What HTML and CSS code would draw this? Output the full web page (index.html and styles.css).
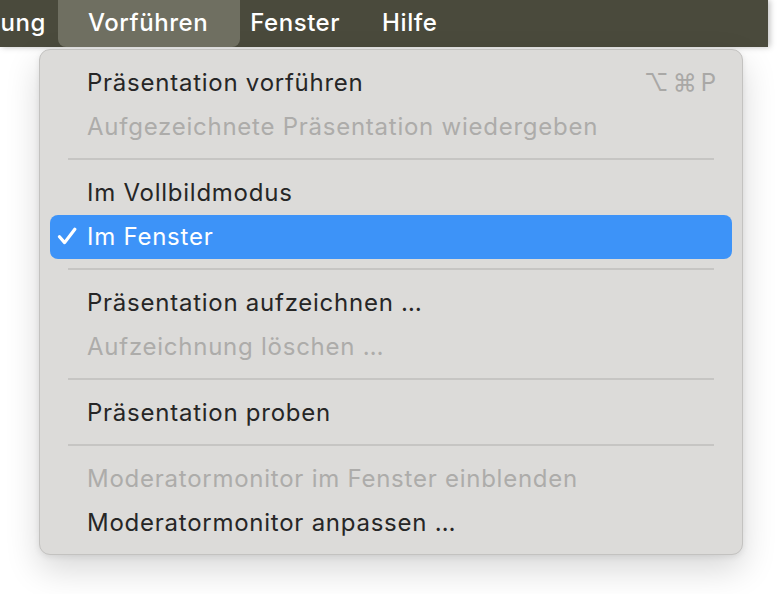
FILE: index.html
```html
<!DOCTYPE html>
<html lang="de">
<head>
<meta charset="utf-8">
<title>Vorführen</title>
<link rel="stylesheet" href="styles.css">
</head>
<body>
<div class="menubar">
  <span class="bar-item cut">ung</span>
  <span class="bar-item active">Vorführen</span>
  <span class="bar-item">Fenster</span>
  <span class="bar-item">Hilfe</span>
</div>
<div class="menu">
  <div class="row"><span class="label">Präsentation vorführen</span><span class="shortcut">⌥⌘P</span></div>
  <div class="row disabled"><span class="label">Aufgezeichnete Präsentation wiedergeben</span></div>
  <div class="sep"></div>
  <div class="row"><span class="label">Im Vollbildmodus</span></div>
  <div class="row selected"><svg class="check" width="20" height="18" viewBox="0 0 20 18"><path d="M2.5 9.8 L7.6 15.6 L17.8 2.2" fill="none" stroke="#fff" stroke-width="3.2" stroke-linecap="round" stroke-linejoin="round"/></svg><span class="label">Im Fenster</span></div>
  <div class="sep"></div>
  <div class="row"><span class="label">Präsentation aufzeichnen …</span></div>
  <div class="row disabled"><span class="label">Aufzeichnung löschen …</span></div>
  <div class="sep"></div>
  <div class="row"><span class="label">Präsentation proben</span></div>
  <div class="sep"></div>
  <div class="row disabled"><span class="label">Moderatormonitor im Fenster einblenden</span></div>
  <div class="row"><span class="label">Moderatormonitor anpassen …</span></div>
</div>
</body>
</html>
```
FILE: styles.css
```css
* { box-sizing: border-box; }
html, body {
  margin: 0;
  padding: 0;
  background: #ffffff;
  width: 782px;
  height: 594px;
  overflow: hidden;
  font-family: Inter, "Noto Sans", "Liberation Sans", sans-serif;
}
.menubar {
  width: 768px;
  height: 47px;
  background: #4a4a3c;
  display: flex;
  align-items: stretch;
  gap: 42px;
  color: #ffffff;
  font-size: 24px;
  font-weight: 500;
  letter-spacing: 0.55px;
  box-shadow: 2px 0 6px rgba(0,0,0,0.25);
}
.bar-item {
  display: flex;
  align-items: center;
  padding-bottom: 2px;
}
.bar-item.cut {
  width: 46px;
  justify-content: flex-end;
  overflow: hidden;
}
.bar-item.active {
  background: #6f6f61;
  border-radius: 0 0 8px 8px;
  padding: 0 32px 2px 30px;
  margin: 0 -32px 0 -30px;
}
.menu {
  margin: 2px 0 0 39px;
  width: 704px;
  background: #dcdbd9;
  border: 1px solid #c3c2c0;
  border-radius: 11px;
  padding: 11px 10px 9px;
  box-shadow: 0 14px 34px rgba(0,0,0,0.16), 0 2px 6px rgba(0,0,0,0.08);
  font-size: 24px;
  letter-spacing: 0.75px;
  color: #262626;
}
.row {
  height: 44px;
  display: flex;
  align-items: center;
  padding: 0 16px 1px 37px;
  border-radius: 8px;
  position: relative;
}
.row .label { flex: 1; }
.row.disabled { color: #adacaa; }
.row.selected {
  background: #3d93f8;
  color: #ffffff;
}
.check {
  position: absolute;
  left: 7px;
  top: 12px;
}
.shortcut {
  color: #a9a8a6;
  letter-spacing: 4px;
  margin-right: -4px;
}
.sep {
  height: 2px;
  margin: 9px 18px 11px;
  background: #c6c5c3;
}
```
